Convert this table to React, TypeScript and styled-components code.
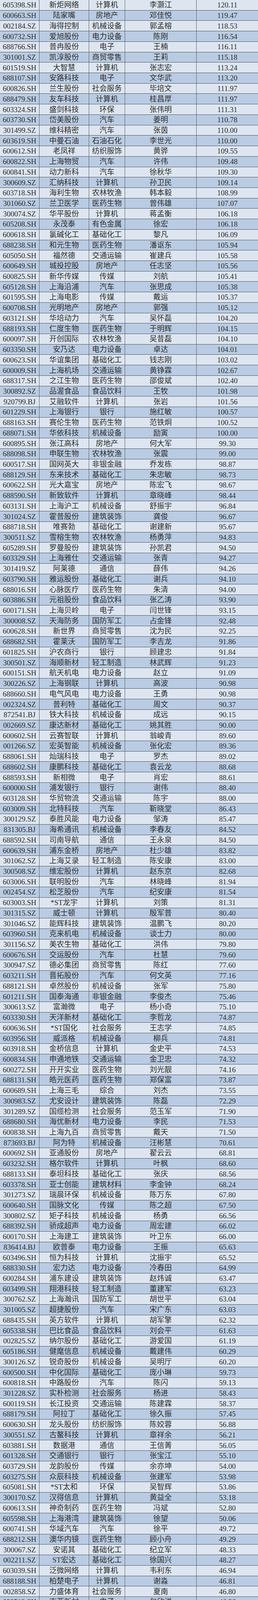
import styled, { createGlobalStyle } from "styled-components";

const GlobalStyle = createGlobalStyle`
  html, body {
    margin: 0;
    padding: 0;
    background: #dde6f0;
  }
`;

const raw = `605398.SH|新炬网络|计算机|李灏江|120.11
600663.SH|陆家嘴|房地产|邓佳悦|119.47
002184.SZ|海得控制|机械设备|郭孟榕|118.53
600732.SH|爱旭股份|电力设备|陈刚|116.54
688766.SH|普冉股份|电子|王楠|116.11
301001.SZ|凯淳股份|商贸零售|王莉|115.18
601519.SH|大智慧|计算机|张志宏|113.24
688107.SH|安路科技|电子|文华武|113.20
600826.SH|兰生股份|社会服务|毕培文|111.97
688479.SH|友车科技|计算机|桂昌厚|111.97
603324.SH|盛剑科技|环保|张伟明|111.31
603730.SH|岱美股份|汽车|姜明|110.78
301499.SZ|维科精密|汽车|张茵|110.00
603619.SH|中曼石油|石油石化|李世光|110.00
600612.SH|老凤祥|纺织服饰|黄骅|109.55
600822.SH|上海物贸|汽车|许伟|109.48
600841.SH|动力新科|汽车|徐秋华|109.30
300609.SZ|汇纳科技|计算机|孙卫民|109.14
603718.SH|海利生物|农林牧渔|韩本毅|108.99
301060.SZ|兰卫医学|医药生物|曾伟雄|107.07
300074.SZ|华平股份|计算机|蒋孟衡|106.18
605208.SH|永茂泰|有色金属|徐宏|106.18
600618.SH|氯碱化工|基础化工|黎凡|106.09
688238.SH|和元生物|医药生物|潘讴东|105.94
605050.SH|福然德|交通运输|崔建兵|105.58
600649.SH|城投控股|房地产|任志坚|105.56
600825.SH|新华传媒|传媒|刘航|105.41
605128.SH|上海沿浦|汽车|张思成|105.38
601595.SH|上海电影|传媒|戴运|105.37
600708.SH|光明地产|房地产|郭强|105.12
603121.SH|华培动力|汽车|吴怀磊|104.20
688193.SH|仁度生物|医药生物|于明辉|104.15
600097.SH|开创国际|农林牧渔|吴昔磊|104.10
603350.SH|安乃达|电力设备|卓达|104.01
600623.SH|华谊集团|基础化工|钱志刚|103.02
600009.SH|上海机场|交通运输|黄铮霖|102.67
688317.SH|之江生物|医药生物|邵俊斌|102.40
300892.SZ|品渥食品|食品饮料|王牧|101.98
920799.BJ|艾融软件|计算机|张岩|101.56
601229.SH|上海银行|银行|施红敏|100.57
688163.SH|赛伦生物|医药生物|范铁炯|100.52
688071.SH|华依科技|机械设备|励寅|100.00
600895.SH|张江高科|房地产|何大军|99.30
688098.SH|申联生物|农林牧渔|张震|99.00
600517.SH|国网英大|非银金融|乔发栋|98.87
688129.SH|东来技术|基础化工|朱忠敏|98.73
600622.SH|光大嘉宝|房地产|陈宏飞|98.67
688590.SH|新致软件|计算机|章晓峰|98.44
603131.SH|上海沪工|机械设备|舒振宇|96.84
301024.SZ|霍普股份|建筑装饰|龚俊|96.67
688718.SH|唯赛勃|基础化工|谢建新|95.67
300511.SZ|雪榕生物|农林牧渔|杨勇萍|94.83
605289.SH|罗曼股份|建筑装饰|孙凯君|94.50
603329.SH|上海雅仕|交通运输|张青|94.27
301419.SZ|阿莱德|通信|薛伟|94.26
603790.SH|雅运股份|基础化工|谢兵|94.10
688016.SH|心脉医疗|医药生物|朱清|94.00
603886.SH|元祖股份|食品饮料|张乙涛|93.90
600171.SH|上海贝岭|电子|闫世锋|93.15
300008.SZ|天海防务|国防军工|占金锋|92.48
600628.SH|新世界|商贸零售|沈为民|92.25
688682.SH|霍莱沃|国防军工|李吉龙|91.86
601825.SH|沪农商行|银行|顾建忠|91.84
300501.SZ|海顺新材|轻工制造|林武辉|91.23
600151.SH|航天机电|电力设备|赵立|91.09
300226.SZ|上海钢联|计算机|高波|90.98
688660.SH|电气风电|电力设备|王勇|90.98
002324.SZ|普利特|基础化工|周文|90.37
872541.BJ|铁大科技|机械设备|成远|90.15
002669.SZ|康达新材|基础化工|姚其胜|90.00
600602.SH|云赛智联|计算机|翁峻青|89.60
001266.SZ|宏英智能|机械设备|张化宏|89.36
688061.SH|灿瑞科技|电子|罗杰|89.02
688602.SH|康鹏科技|基础化工|袁云龙|88.68
688593.SH|新相微|电子|肖宏|88.61
600000.SH|浦发银行|银行|谢伟|88.40
603128.SH|华贸物流|交通运输|陈宇|88.00
603009.SH|北特科技|汽车|靳晓堂|86.43
300129.SZ|泰胜风能|电力设备|邹涛|85.47
831305.BJ|海希通讯|机械设备|李春友|84.52
688592.SH|司南导航|通信|王永泉|84.50
600639.SH|浦东金桥|房地产|杜少雄|83.82
301062.SZ|上海艾录|轻工制造|陈安康|83.00
300508.SZ|维宏股份|计算机|赵东京|82.68
603006.SH|联明股份|汽车|林晓峰|81.94
002454.SZ|松芝股份|汽车|纪安康|81.54
603003.SH|*ST龙宇|计算机|刘策|81.31
301315.SZ|威士顿|计算机|殷军普|80.40
301046.SZ|能辉科技|建筑装饰|温鹏飞|80.20
603960.SH|克来机电|机械设备|谈士力|80.00
301156.SZ|美农生物|基础化工|洪伟|79.80
600676.SH|交运股份|汽车|杜慧|79.60
300947.SZ|德必集团|商贸零售|陈红|77.60
603211.SH|晋拓股份|汽车|何文英|77.16
688121.SH|卓然股份|机械设备|张军|75.80
601211.SH|国泰海通|非银金融|李俊杰|75.46
300613.SZ|富瀚微|电子|杨小奇|75.10
603330.SH|天洋新材|基础化工|李哲龙|74.87
600636.SH|*ST国化|社会服务|王志学|74.85
603956.SH|威派格|机械设备|柳兵|74.81
603918.SH|金桥信息|计算机|金史平|74.53
600834.SH|申通地铁|交通运输|金卫忠|74.32
600272.SH|开开实业|医药生物|刘光靓|74.16
688131.SH|皓元医药|医药生物|郑保富|73.87
600689.SH|上海三毛|综合|刘杰|73.55
300983.SZ|尤安设计|建筑装饰|陈磊|72.29
301289.SZ|国缆检测|社会服务|范玉军|71.90
688680.SH|海优新材|电力设备|李民|71.53
600838.SH|上海九百|商贸零售|戴天|71.50
873693.BJ|阿为特|机械设备|汪彬慧|70.61
600692.SH|亚通股份|房地产|翟云云|68.81
603232.SH|格尔软件|计算机|叶枫|68.60
688133.SH|泰坦科技|基础化工|张庆|68.56
603378.SH|亚士创能|建筑材料|李金钟|68.24
301273.SZ|瑞晨环保|机械设备|陈万东|67.80
600640.SH|国脉文化|传媒|陈之超|67.50
300802.SZ|矩子科技|机械设备|杨勇|66.56
688392.SH|骄成超声|电力设备|周宏建|66.02
600170.SH|上海建工|建筑装饰|叶卫东|66.00
836414.BJ|欧普泰|电力设备|王振|65.63
603496.SH|恒为科技|计算机|沈振宇|65.52
688330.SH|宏力达|电力设备|冷春田|64.99
600284.SH|浦东建设|建筑装饰|赵炜诚|63.47
603499.SH|翔港科技|轻工制造|董建军|63.23
300762.SZ|上海瀚讯|国防军工|胡世平|63.04
301005.SZ|超捷股份|汽车|宋广东|63.03
688435.SH|英方软件|计算机|胡军擎|62.32
605338.SH|巴比食品|食品饮料|刘会平|61.63
002825.SZ|纳尔股份|基础化工|游爱国|61.19
605186.SH|健麾信息|机械设备|戴建伟|60.29
300126.SZ|锐奇股份|机械设备|吴明厅|60.20
600500.SH|中化国际|基础化工|庞小琳|59.73
600818.SH|中路股份|汽车|陈闪|59.13
301228.SZ|实朴检测|社会服务|杨进|58.43
600119.SH|长江投资|交通运输|陈建霖|58.37
688179.SH|阿拉丁|基础化工|徐久振|57.45
600630.SH|龙头股份|纺织服饰|陈姣蓉|56.88
300551.SZ|古鳌科技|计算机|章祥余|56.21
603881.SH|数据港|通信|王信菁|56.05
601328.SH|交通银行|银行|张宝江|55.10
603729.SH|龙韵股份|传媒|余亦坤|54.00
603275.SH|众辰科技|机械设备|张建军|53.98
605081.SH|*ST太和|环保|吴智辉|53.86
300170.SZ|汉得信息|计算机|黄益全|53.18
600613.SH|神奇制药|医药生物|冯斌|52.80
605598.SH|上海港湾|建筑装饰|徐望|50.06
600741.SH|华域汽车|汽车|徐平|49.72
688212.SH|澳华内镜|医药生物|顾小舟|49.29
300067.SZ|安诺其|基础化工|纪立军|48.33
002211.SZ|ST宏达|基础化工|徐国兴|48.27
603039.SH|泛微网络|计算机|韦利东|46.94
688188.SH|柏楚电子|计算机|谢淼|46.81
002858.SZ|力盛体育|社会服务|夏南|46.80
688519.SH|南亚新材|电子|包欣洋|46.36
300039.SZ|上海凯宝|医药生物|周迎宾|46.13
002451.SZ|摩恩电气|电力设备|朱志兰|45.60
688217.SH|睿昂基因|医药生物|熊慧|45.47
600278.SH|东方创业|商贸零售|党晔|45.09
002346.SZ|柘中股份|电力设备|蒋陆峰|44.83
603580.SH|*ST艾艾|基础化工|涂国圣|44.00
600679.SH|上海凤凰|汽车|王朝阳|43.70
688118.SH|普元信息|计算机|刘亚东|43.61
603030.SH|全筑股份|建筑装饰|陈文|43.29
603895.SH|天永智能|机械设备|荣俊林|42.94
603777.SH|来伊份|食品饮料|郁瑞芬|42.10
603682.SH|锦和商管|商贸零售|郁敏珺|42.00
300462.SZ|华铭智能|计算机|张亮|41.60
603200.SH|上海洗霸|环保|王羽旸|39.52
600061.SH|国投资本|非银金融|陆俊|38.82
301070.SZ|开勒股份|机械设备|卢小波|38.64
603690.SH|至纯科技|电子|蒋渊|38.60
600651.SH|飞乐音响|汽车|金凡|37.35
603189.SH|网达软件|计算机|冯达|36.00
603022.SH|新通联|轻工制造|徐宏菁|34.86
600675.SH|中华企业|房地产|段石磊|34.50
600604.SH|市北高新|房地产|马慧民|33.77
600626.SH|申达股份|汽车|李捷|32.88
600530.SH|交大昂立|食品饮料|嵇霖|32.69
600608.SH|*ST沪科|商贸零售|刘文鑫|32.54
300380.SZ|安硕信息|计算机|高勇|30.24
688798.SH|艾为电子|电子|孙洪军|30.00
836504.BJ|博迅生物|医药生物|吕明杰|29.46
300171.SZ|东富龙|医药生物|郑效东|27.12
002058.SZ|*ST威尔|机械设备|殷骏|24.77
600748.SH|上实发展|房地产|徐槟|21.10
600420.SH|国药现代|医药生物|刘勇|19.95
600018.SH|上港集团|交通运输|宋晓东|16.50
688648.SH|中邮科技|机械设备|尚德威|14.20
603159.SH|上海亚虹|机械设备|孙力|13.93
301025.SZ|读客文化|传媒|付丽|10.20
600648.SH|外高桥|房地产|邵宇平|10.12
603020.SH|爱普股份|基础化工|魏中浩|6.00
600696.SH|*ST岩石|食品饮料|朱诺|3.83
600193.SH|*ST创兴|建筑装饰|杨喆|2.73
002178.SZ|延华智能|计算机|—|0.00
002022.SZ|科华生物|医药生物|李明|0.00
002162.SZ|悦心健康|轻工制造|李慈雄|0.00`;

const rows = raw.split("\n").map((line) => line.split("|"));

// all rows share the full page height evenly
const rowHeight = 5265 / rows.length;

export default function App() {
    return (
        <>
            <GlobalStyle/>
            <TableStyle>
                {rows.map((cells, i) => (
                    <RowStyle key={cells[0]} $shaded={i % 2 === 1} style={{height: rowHeight}}>
                        {cells.map((text, j) => (
                            <CellStyle key={j}>{text}</CellStyle>
                        ))}
                    </RowStyle>
                ))}
            </TableStyle>
        </>
    );
}

const TableStyle = styled.div`
  display: flex;
  flex-direction: column;
  width: 660px;
  font-family: "Liberation Serif", "Noto Sans CJK SC", serif;
  font-size: 19px;
  line-height: 19px;
  color: #2e2e2e;
`;

const RowStyle = styled.div<{ $shaded: boolean }>`
  flex: none;
  display: grid;
  grid-template-columns: 101px 127px 92px 183px 157px;
  background: ${(p) => (p.$shaded ? "#b9cce3" : "#dde6f0")};
  border-bottom: 1px solid #4d4f55;
  box-sizing: border-box;
  overflow: hidden;
`;

const CellStyle = styled.div`
  display: flex;
  align-items: center;
  justify-content: center;
  white-space: nowrap;
  overflow: hidden;
  border-right: 1px solid #55575c;

  &:last-child {
    border-right: none;
  }
`;
